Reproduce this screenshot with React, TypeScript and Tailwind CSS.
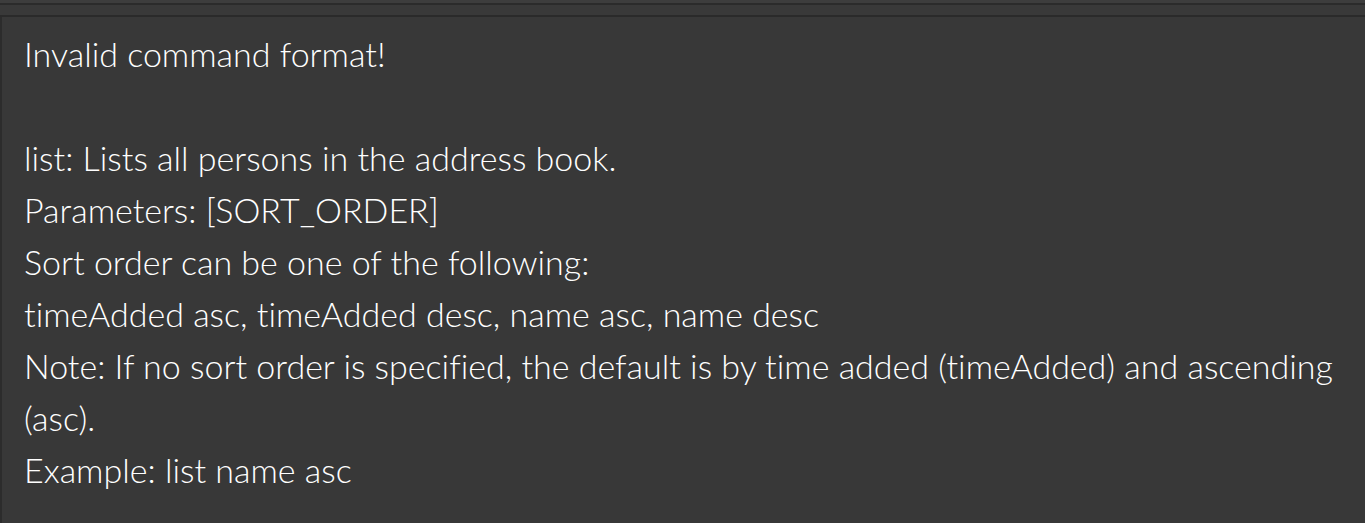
const LINES = [
  'Invalid command format!',
  '',
  'list: Lists all persons in the address book.',
  'Parameters: [SORT_ORDER]',
  'Sort order can be one of the following:',
  'timeAdded asc, timeAdded desc, name asc, name desc',
  'Note: If no sort order is specified, the default is by time added (timeAdded) and ascending',
  '(asc).',
  'Example: list name asc',
];

export default function App() {
  return (
    <div className="flex h-[523px] w-[1365px] flex-col overflow-hidden bg-[#383838]">
      {/* top toolbar edge */}
      <div className="h-[3px] bg-[#3d3d3d]" />
      <div className="h-[2px] bg-[#2b2b2b]" />
      <div className="h-[10px] bg-[#393939]" />
      <div className="h-[2px] bg-[#2a2a2a]" />

      {/* result display */}
      <main className="flex-1 border-l-2 border-[#2c2c2c] bg-[#383838] px-[22px] pt-[11px] font-['Lato',sans-serif] text-[34px] font-light leading-[52px] text-white [font-variant-ligatures:none]">
        {LINES.map((line, i) => (
          <div key={i} className="h-[52px] whitespace-pre">
            {line}
          </div>
        ))}
      </main>
    </div>
  );
}
